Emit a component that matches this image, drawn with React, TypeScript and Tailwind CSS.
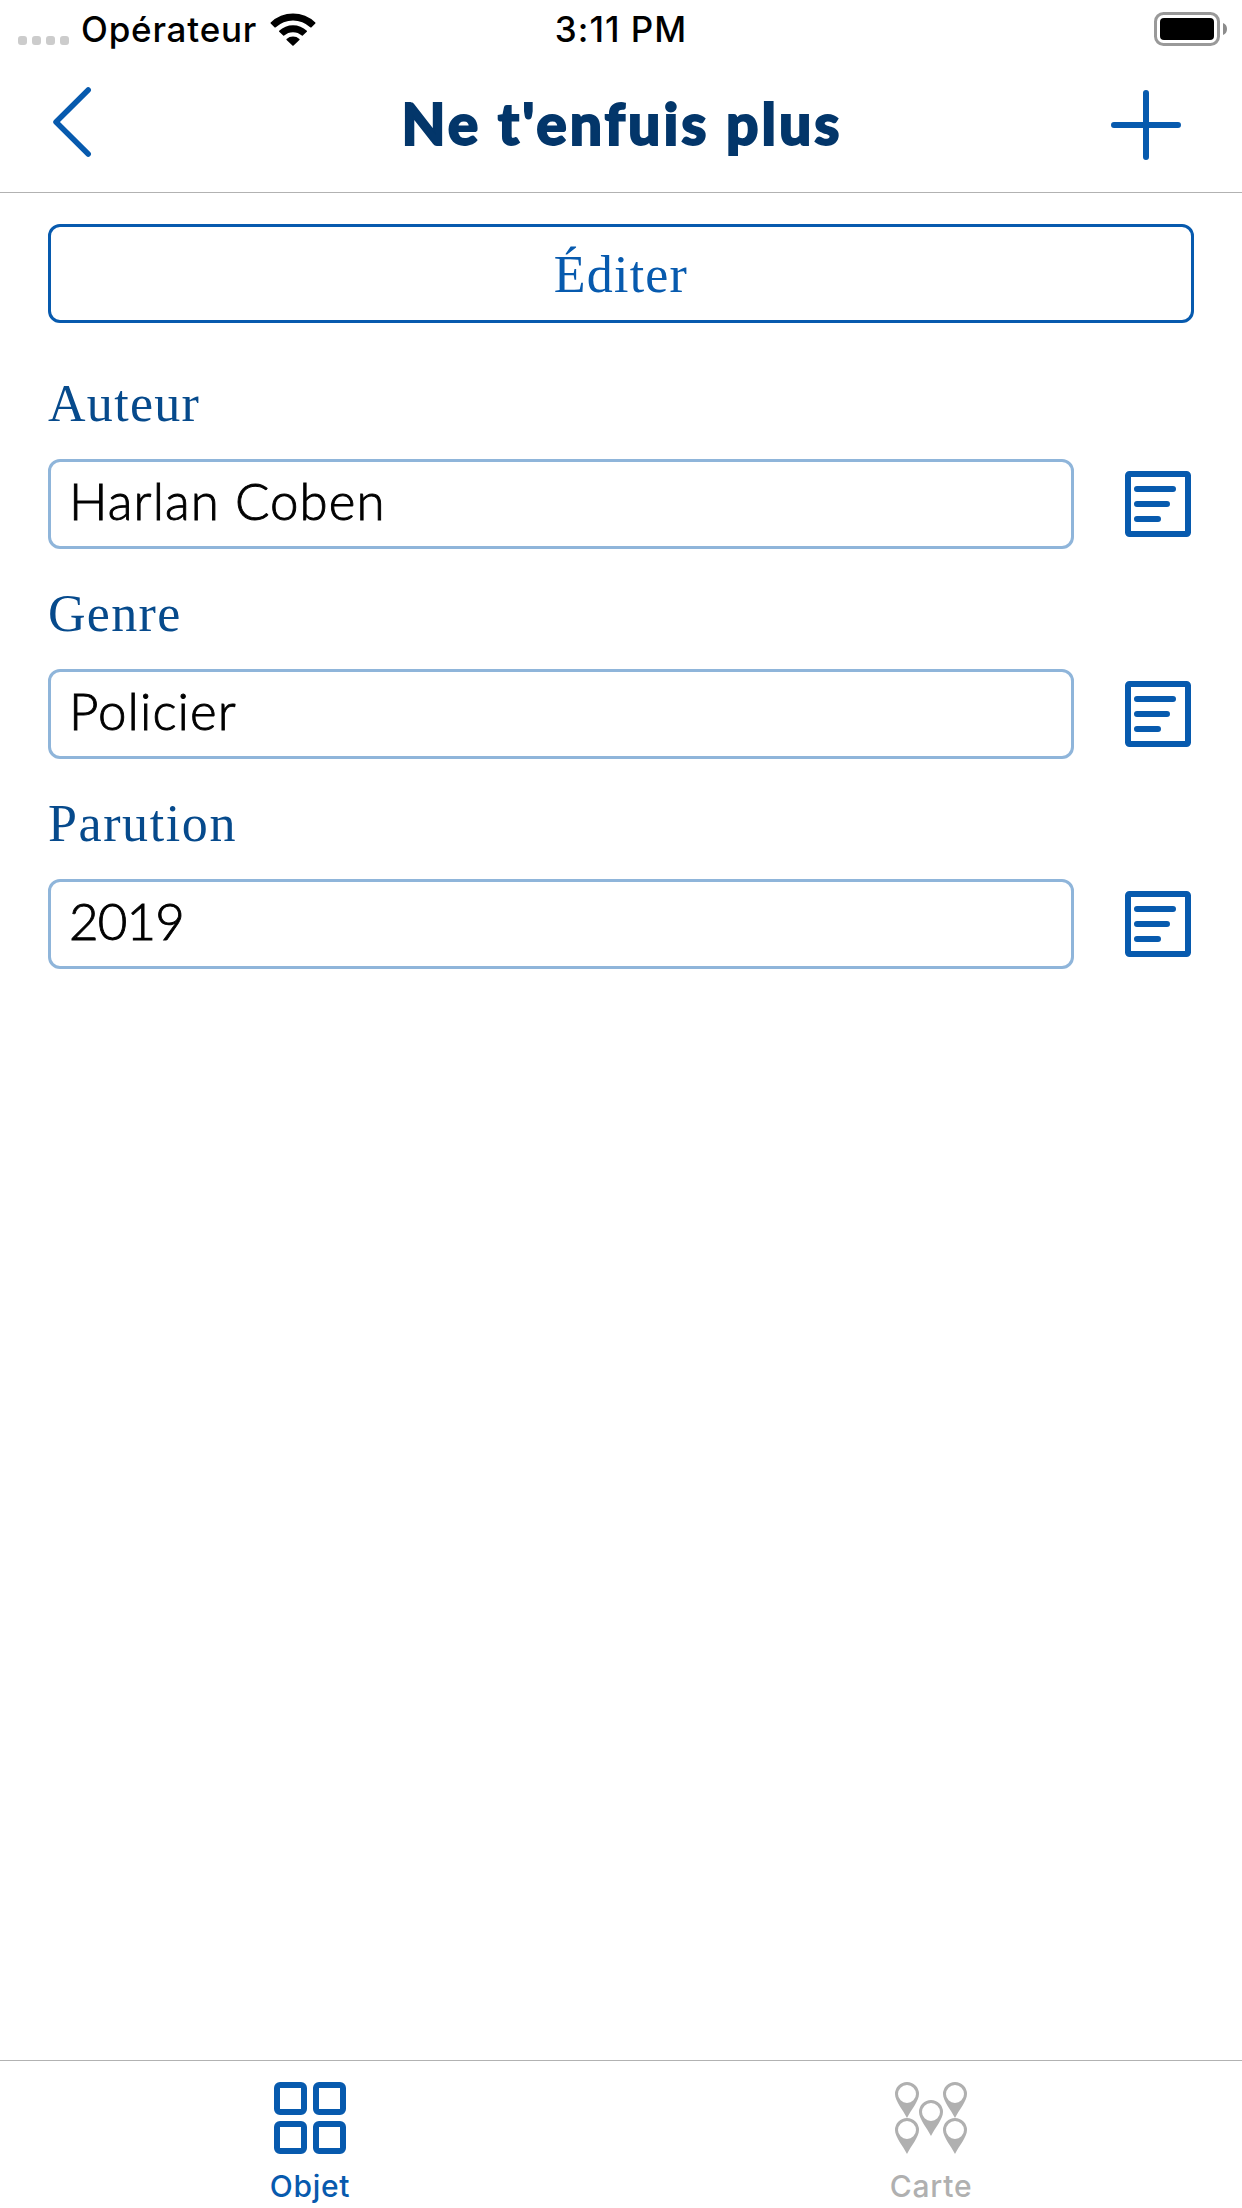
const fields = [
  { label: 'Auteur', value: 'Harlan Coben', labelSpacing: 'tracking-[1.3px]', valueSpacing: 'tracking-[1.1px]' },
  { label: 'Genre', value: 'Policier', labelSpacing: 'tracking-[1.3px]', valueSpacing: 'tracking-[1.1px]' },
  { label: 'Parution', value: '2019', labelSpacing: 'tracking-[1.6px]', valueSpacing: 'tracking-[-0.8px]' },
];

const pins = [
  [12, 12],
  [60, 12],
  [36, 30],
  [12, 48],
  [60, 48],
];

function WifiIcon() {
  return (
    <svg className="ml-[10px] mt-[13px] h-[33px] w-[46px] shrink-0" viewBox="0 0 46 33">
      <path d="M0.7 9.5A32 32 0 0 1 45.3 9.5Q45.7 10 45.3 10.5L41.3 14.4Q40.8 14.8 40.2 14.3A25 25 0 0 0 5.8 14.3Q5.2 14.8 4.7 14.4L.7 10.5Q.3 10 .7 9.5Z" />
      <path d="M9.2 17.8A20 20 0 0 1 36.8 17.8Q37.3 18.3 36.8 18.8L32.8 22.6Q32.3 23 31.8 22.6A13 13 0 0 0 14.2 22.6Q13.7 23 13.2 22.6L9.2 18.8Q8.7 18.3 9.2 17.8Z" />
      <path d="M16.6 26A9.5 9.5 0 0 1 29.4 26Q29.8 26.5 29.4 27L23.6 32.6Q23 33.1 22.4 32.6L16.6 27Q16.2 26.5 16.6 26Z" />
    </svg>
  );
}

function NoteIcon() {
  return (
    <svg className="h-[66px] w-[66px]" viewBox="0 0 66 66" fill="none" stroke="#075aae" strokeWidth="6" strokeLinecap="round">
      <rect x="3" y="3" width="60" height="60" rx="1.5" />
      <path d="M12 18H48M12 33H42M12 48H33" />
    </svg>
  );
}

export default function App() {
  return (
    <div className="flex h-[2208px] w-[1242px] flex-col overflow-hidden bg-white font-['Inter',sans-serif]">
      <div className="grid h-[60px] shrink-0 grid-cols-3 text-[35px] leading-[59px] font-medium text-black">
        <div className="flex items-start pl-[18px]">
          <div className="mt-[36px] flex gap-[5px]">
            <i className="h-[9px] w-[9px] rounded-[3px] bg-[#cccccc]" />
            <i className="h-[9px] w-[9px] rounded-[3px] bg-[#cccccc]" />
            <i className="h-[9px] w-[9px] rounded-[3px] bg-[#cccccc]" />
            <i className="h-[9px] w-[9px] rounded-[3px] bg-[#cccccc]" />
          </div>
          <span className="ml-[12px] w-[179px] whitespace-nowrap tracking-[0.8px]">Opérateur</span>
          <WifiIcon />
        </div>
        <span className="text-center tracking-[1px] whitespace-nowrap">3:11 PM</span>
        <div className="flex justify-end pt-[12px] pr-[15px]">
          <svg className="h-[34px] w-[73px]" viewBox="0 0 73 34">
            <rect x="1.5" y="1.5" width="63" height="31" rx="8" fill="none" stroke="#999999" strokeWidth="3" />
            <rect x="6" y="6" width="54" height="22" rx="4" />
            <path d="M69 11Q73 12.5 73 17T69 23Z" fill="#8c8c8c" />
          </svg>
        </div>
      </div>

      <header className="flex h-[133px] shrink-0 items-start justify-between border-b border-[#b2b2b2] pr-[61px] pl-[53px]">
        <svg className="mt-[27px] h-[70px] w-[70px]" viewBox="0 0 70 70" fill="none" stroke="#075aae" strokeWidth="5.5" strokeLinecap="round" strokeLinejoin="round">
          <path d="M35.2 3L3 35 35.2 67" />
        </svg>
        <h1 className="mt-[28px] ml-[10px] text-[57px] leading-[70px] font-black tracking-[3px] whitespace-nowrap text-[#03366a] font-['Lato',sans-serif] [-webkit-text-stroke:1.8px_#03366a]">
          Ne t'enfuis plus
        </h1>
        <svg className="mt-[30px] h-[70px] w-[70px]" viewBox="0 0 70 70" fill="none" stroke="#075aae" strokeWidth="6" strokeLinecap="round">
          <path d="M3 35H67M35 3V67" />
        </svg>
      </header>

      <main className="flex flex-1 flex-col px-[48px] pt-[31px]">
        <button className="h-[99px] shrink-0 rounded-[12px] border-3 border-[#075aae] text-[52px] leading-[95px] tracking-[1.2px] text-[#075aae] font-['Liberation_Serif',serif]">
          Éditer
        </button>
        <div className="mt-[46px] flex flex-col">
          {fields.map((field) => (
            <label key={field.label} className="flex h-[210px] flex-col">
              <span className={`h-[90px] pt-[5px] text-[52px] leading-[60px] text-[#064a8c] font-['Liberation_Serif',serif] ${field.labelSpacing}`}>
                {field.label}
              </span>
              <span className="flex items-center justify-between pr-[3px]">
                <span className={`h-[90px] w-[1026px] rounded-[12px] border-3 border-[#8fb5da] pl-[18px] text-[51px] leading-[78px] font-light text-black font-['Lato',sans-serif] [-webkit-text-stroke:0.9px_black] ${field.valueSpacing}`}>
                  {field.value}
                </span>
                <NoteIcon />
              </span>
            </label>
          ))}
        </div>
      </main>

      <nav className="grid h-[148px] shrink-0 grid-cols-2 border-t border-[#b2b2b2] text-[30px] leading-[36px] font-medium">
        <a className="flex flex-col items-center pt-[21px] pr-px text-[#075aae]">
          <svg className="h-[72px] w-[72px]" viewBox="0 0 72 72" fill="none" stroke="currentColor" strokeWidth="6">
            <rect x="3" y="3" width="27" height="27" rx="3" />
            <rect x="42" y="3" width="27" height="27" rx="3" />
            <rect x="3" y="42" width="27" height="27" rx="3" />
            <rect x="42" y="42" width="27" height="27" rx="3" />
          </svg>
          <span className="mt-[14px] tracking-[0.7px]">Objet</span>
        </a>
        <a className="flex flex-col items-center pt-[21px] pr-px text-[#b0b0b0]">
          <svg className="h-[72px] w-[72px]" viewBox="0 0 72 72" fill="currentColor">
            {pins.map(([x, y]) => (
              <path
                key={`${x}-${y}`}
                fillRule="evenodd"
                transform={`translate(${x} ${y})`}
                d="M0-12A12 12 0 0 1 12 0C12 7 4 16 0 24C-4 16-12 7-12 0A12 12 0 0 1 0-12ZM0-9A9 9 0 0 0 0 9A9 9 0 0 0 0-9Z"
              />
            ))}
          </svg>
          <span className="mt-[14px] tracking-[0.8px]">Carte</span>
        </a>
      </nav>
    </div>
  );
}
